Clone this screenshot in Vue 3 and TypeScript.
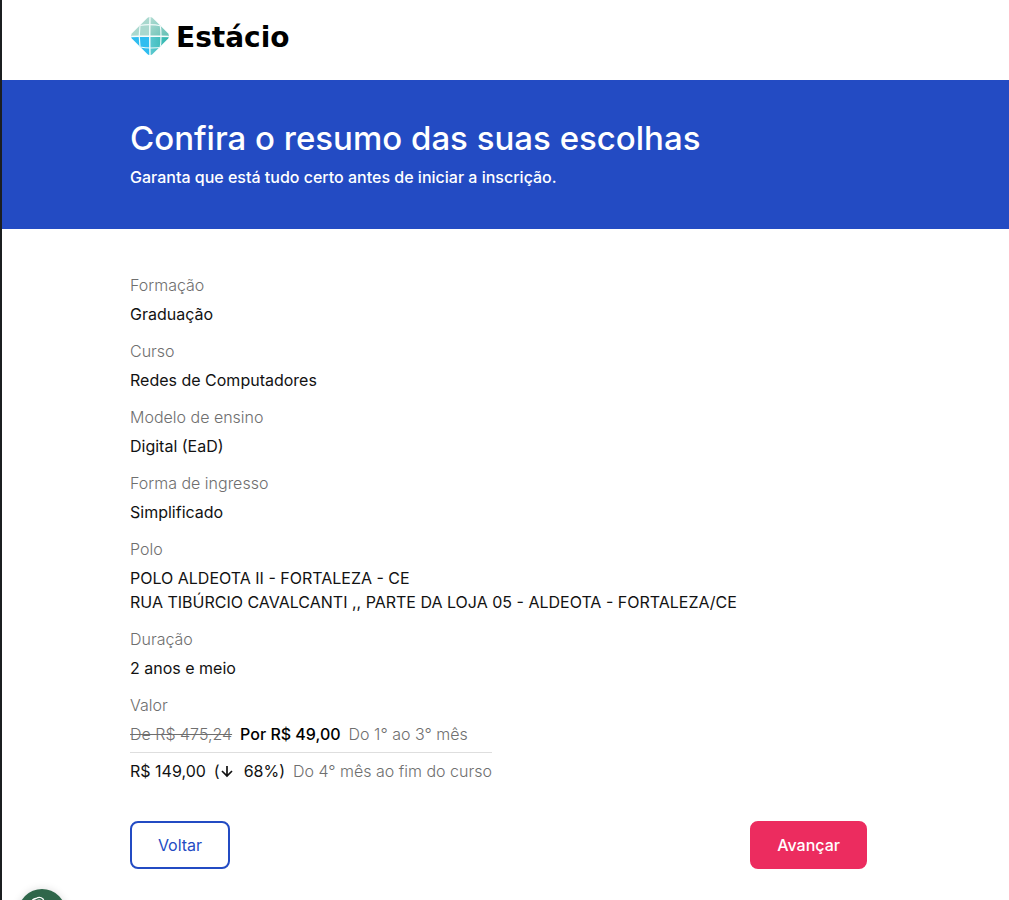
<script setup lang="ts">
interface Field {
  label: string
  lines: string[]
}

const fields: Field[] = [
  { label: 'Formação', lines: ['Graduação'] },
  { label: 'Curso', lines: ['Redes de Computadores'] },
  { label: 'Modelo de ensino', lines: ['Digital (EaD)'] },
  { label: 'Forma de ingresso', lines: ['Simplificado'] },
  {
    label: 'Polo',
    lines: [
      'POLO ALDEOTA II - FORTALEZA - CE',
      'RUA TIBÚRCIO CAVALCANTI ,, PARTE DA LOJA 05 - ALDEOTA - FORTALEZA/CE',
    ],
  },
  { label: 'Duração', lines: ['2 anos e meio'] },
]
</script>

<template>
  <div class="page">
    <header class="topbar">
      <a class="brand" href="#" aria-label="Estácio">
        <svg class="mark" viewBox="0 0 40 40" aria-hidden="true">
          <defs>
            <clipPath id="diamond">
              <path d="M17.6 1.8Q20 0 22.4 1.8L38.2 17.6Q40 20 38.2 22.4L22.4 38.2Q20 40 17.6 38.2L1.8 22.4Q0 20 1.8 17.6Z" />
            </clipPath>
            <linearGradient id="teal" x1="0" y1="0" x2="1" y2="1">
              <stop offset="0" stop-color="#b4ddd3" />
              <stop offset="1" stop-color="#5fbfb4" />
            </linearGradient>
            <linearGradient id="aqua" x1="0" y1="0" x2="1" y2="0">
              <stop offset="0" stop-color="#5cc9d2" />
              <stop offset="1" stop-color="#2cb5a8" />
            </linearGradient>
          </defs>
          <g clip-path="url(#diamond)">
            <rect width="20" height="20" fill="#a9d8ce" />
            <rect x="20" width="20" height="20" fill="url(#teal)" />
            <rect y="20" width="20" height="20" fill="#2fbdf0" />
            <rect x="20" y="20" width="20" height="20" fill="url(#aqua)" />
            <path d="M0 20.5Q20 19.5 40 20.5M20 0Q19.5 20 20 40" fill="none" stroke="#f6fdfc" stroke-width="1.4" />
            <path d="M10 9.5Q20 7.5 32 10M10 31Q20 33 34 31M10 9Q8.5 20 10 31M30 7Q32 20 30 34" fill="none" stroke="#effaf9" stroke-width="1.2" />
          </g>
        </svg>
        <span class="wordmark">Estácio</span>
      </a>
    </header>

    <section class="hero">
      <h1>Confira o resumo das suas escolhas</h1>
      <p>Garanta que está tudo certo antes de iniciar a inscrição.</p>
    </section>

    <main class="content">
      <dl class="summary">
        <div v-for="field in fields" :key="field.label" class="field">
          <dt>{{ field.label }}</dt>
          <dd v-for="line in field.lines" :key="line">{{ line }}</dd>
        </div>
        <div class="field">
          <dt>Valor</dt>
          <dd class="prices">
            <div class="price">
              <s>De R$ 475,24</s>
              <strong>Por R$ 49,00</strong>
              <span class="period">Do 1° ao 3° mês</span>
            </div>
            <div class="price">
              <span>R$ 149,00</span>
              <span class="discount">
                <span>(</span>
                <svg viewBox="0 0 14 14" aria-hidden="true">
                  <path d="M7 2V12M2 7L7 12L12 7" fill="none" stroke="currentColor" stroke-width="1.7" />
                </svg>
                <span class="percent">68%)</span>
              </span>
              <span class="period">Do 4° mês ao fim do curso</span>
            </div>
          </dd>
        </div>
      </dl>
      <div class="actions">
        <button class="back" type="button">Voltar</button>
        <button class="next" type="button">Avançar</button>
      </div>
    </main>

    <button class="cookie" type="button" aria-label="Cookies">
      <svg viewBox="0 0 48 48" aria-hidden="true">
        <circle cx="24" cy="24" r="24" fill="#2f664a" />
        <path d="M13 14Q14 10 18 9.5Q22 7 25 10L26 12M17 13Q20 10 24 12" fill="none" stroke="#fff" stroke-width="1.3" />
      </svg>
    </button>
  </div>
</template>

<style>
body {
  margin: 0;
  overflow: hidden;
}
</style>

<style scoped>
.page {
  box-sizing: border-box;
  min-height: 100vh;
  border-left: 2px solid #1b1e20;
  background: #fff;
  color: #121212;
  font: 400 16px/24px Inter, "Liberation Sans", sans-serif;
}

.topbar,
.hero,
.content {
  padding-right: 142px;
  padding-left: 128px;
}

.topbar {
  display: flex;
  padding-top: 16px;
  padding-bottom: 20px;
}

.brand {
  display: flex;
  align-items: flex-start;
  gap: 6px;
  color: #000;
  text-decoration: none;
}

.mark {
  width: 40px;
  height: 40px;
}

.wordmark {
  font: 700 28px/44px "DejaVu Sans", sans-serif;
}

.hero {
  padding-top: 36px;
  padding-bottom: 40px;
  background: #234bc3;
  color: #fff;
}

h1 {
  margin: 0 0 5px;
  font: 500 33px/44px Inter, sans-serif;
}

.hero p {
  margin: 0;
  font-weight: 500;
}

.content {
  padding-top: 44px;
}

.summary {
  display: flex;
  flex-direction: column;
  gap: 13px;
  margin: 0;
}

dt {
  margin-bottom: 5px;
  color: #6f6f6f;
  font-weight: 300;
}

dd {
  margin: 0;
}

.prices {
  width: fit-content;
}

.price {
  display: flex;
  gap: 8px;
}

.price + .price {
  margin-top: 6px;
  padding-top: 6px;
  border-top: 1px solid #dedede;
}

s,
.period {
  color: #6f6f6f;
  font-weight: 300;
}

strong {
  color: #000;
  font-weight: 500;
}

.discount {
  display: flex;
  align-items: center;
}

.discount svg {
  width: 14px;
  height: 14px;
}

.percent {
  margin-left: 10px;
}

.actions {
  display: flex;
  justify-content: space-between;
  margin-top: 38px;
}

.actions button {
  box-sizing: border-box;
  min-width: 100px;
  height: 48px;
  padding: 0 25px;
  border: 2px solid #234bc3;
  border-radius: 8px;
  background: #fff;
  color: #234bc3;
  font: inherit;
}

.actions .next {
  border-color: #ec2c5f;
  background: #ec2c5f;
  color: #fff;
  font-weight: 500;
}

.cookie {
  position: fixed;
  bottom: -37px;
  left: 18px;
  width: 48px;
  height: 48px;
  padding: 0;
  border: 0;
  border-radius: 50%;
  background: none;
  box-shadow: 0 0 8px #0002;
}

.cookie svg {
  display: block;
}
</style>
